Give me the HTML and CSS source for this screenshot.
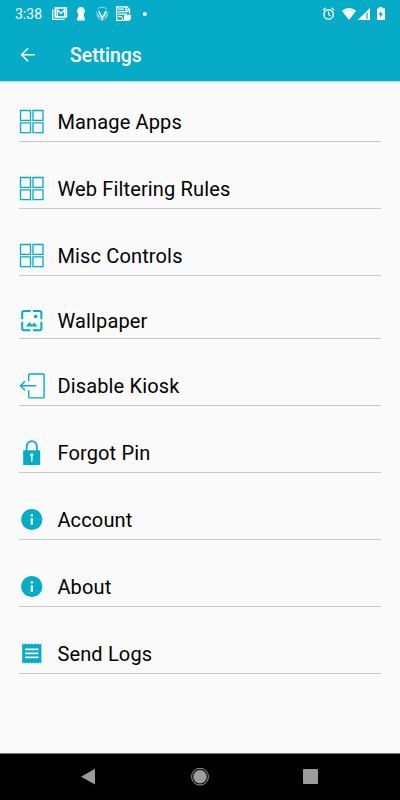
FILE: index.html
```html
<!DOCTYPE html>
<html lang="en">
<head>
    <meta charset="UTF-8">
    <meta name="viewport" content="width=device-width, initial-scale=1.0">
    <link rel="stylesheet" href="styles.css">
    <title>Settings</title>
</head>
<body>
    <!-- shared icons -->
    <svg class="defs" width="0" height="0">
        <symbol id="grid" viewBox="0 0 26 26">
            <path d="M1.5 1.5h10v9.8h-10zM14 1.5h10v9.8H14zM1.5 13.8h10v9.8h-10zM14 13.8h10v9.8H14z" fill="none" stroke="#06abc7" stroke-width="1.3"/>
        </symbol>
        <symbol id="info" viewBox="0 0 26 26">
            <circle cx="12.8" cy="12.5" r="10.6" fill="#06abc7"/>
            <path d="M11.7 7.3h2.2v2.2h-2.2zM11.7 11.2h2.2v6.5h-2.2z" fill="#fff"/>
        </symbol>
    </svg>

    <header class="header">
        <div class="status">
            <span class="time">3:38</span>
            <svg class="left-icons" width="100" height="28" viewBox="50 0 100 28">
                <!-- mail -->
                <path d="M52.7 9.5v9.8h12" fill="none" stroke="#fff" stroke-width="1.3"/>
                <path d="M55.2 8.1h11.2v9H55.2z" fill="none" stroke="#fff" stroke-width="1.5"/>
                <path d="M57.3 17V10l3.7 3.2 3.7-3.2v7" fill="none" stroke="#fff" stroke-width="1.5"/>
                <!-- keyhole -->
                <path d="M81 7a3.9 3.9 0 0 0-2.7 6.7l-.3 3.3-.9 1v2.6h7.8V18l-.9-1-.3-3.3A3.9 3.9 0 0 0 81 7z" fill="#fff"/>
                <!-- v badge -->
                <path d="M97.5 9.5a6 6 0 0 1 9.5 0M96.5 15q1.5 4.3 5.7 5.4M108 15q-1.5 4.3-5.8 5.4" fill="none" stroke="#fff" stroke-opacity=".7" stroke-width=".8"/>
                <path d="M98.8 11l3.4 7.5 4-7.5" fill="none" stroke="#fff" stroke-width="1.6"/>
                <path d="M96.5 12.3l3 5M108 12.3l-3 5" fill="none" stroke="#fff" stroke-width=".8"/>
                <!-- news -->
                <path d="M125 20.3h-8.3V6.8h10.2l2.7 2.8v4" fill="none" stroke="#fff" stroke-width="1.3"/>
                <path d="M126 6.5v3.7h4M118 9.2h6M118 11.7h10.5M118 14.2h9M118 16.7h4M122.5 17v3" fill="none" stroke="#fff" stroke-width="1.2"/>
                <path d="M125 14.8h6V19l-1.7 1.8H124V16z" fill="#fff"/>
                <circle cx="144.8" cy="14" r="2" fill="#fff"/>
            </svg>
            <svg class="right-icons" width="70" height="28" viewBox="320 0 70 28">
                <!-- alarm -->
                <circle cx="328.6" cy="14.4" r="4.7" fill="none" stroke="#fff" stroke-width="1.4"/>
                <path d="M328.6 11.5v3.1l2 1.4M323 10.2l2.8-2.5M334.2 10.2l-2.8-2.5" fill="none" stroke="#fff" stroke-width="1.2"/>
                <!-- wifi -->
                <path d="M341.8 10.8Q349 5.2 356.2 10.8L349 20z" fill="#fff"/>
                <path d="M343.5 12.3Q349 8.2 354.5 12.3" fill="none" stroke="#06abc7" stroke-opacity=".35" stroke-width=".8"/>
                <!-- signal -->
                <path d="M370 8v12h-12.2z" fill="#fff"/>
                <path d="M367 12.5V19" stroke="#06abc7" stroke-width="1.2"/>
                <!-- battery -->
                <path d="M379 7.3h3.8v1.3h2.2V20h-8V8.6h2z" fill="#fff"/>
                <path d="M381.2 10.8l-2.7 4h1.8v3l2.9-4.2h-2z" fill="#06abc7"/>
            </svg>
        </div>
        <div class="toolbar">
            <svg class="back" width="16" height="16" viewBox="0 0 16 16">
                <path d="M14.7 7.7H1.8M8 1.3L1.6 7.7 8 14.1" fill="none" stroke="#fff" stroke-width="1.5"/>
            </svg>
            <h1 class="title">Settings</h1>
        </div>
    </header>

    <main class="list">
        <div class="item">
            <svg class="icon"><use href="#grid"/></svg>
            <span>Manage Apps</span>
        </div>
        <div class="item">
            <svg class="icon"><use href="#grid"/></svg>
            <span>Web Filtering Rules</span>
        </div>
        <div class="item">
            <svg class="icon"><use href="#grid"/></svg>
            <span>Misc Controls</span>
        </div>
        <div class="item short">
            <svg class="icon" viewBox="0 0 26 26">
                <path d="M11.5 3H5A1.8 1.8 0 0 0 3.2 4.8v6.4M14 3h6.6a1.8 1.8 0 0 1 1.8 1.8v6.4M3.2 13.7v6.8A1.8 1.8 0 0 0 5 22.3h6.5M22.4 13.7v6.8a1.8 1.8 0 0 1-1.8 1.8H14" fill="none" stroke="#06abc7" stroke-width="2"/>
                <path d="M7 18.5l3.5-4.5 2.5 3 2-2.5 3.7 4z" fill="#06abc7"/>
                <circle cx="16.6" cy="8.5" r="1.8" fill="#06abc7"/>
            </svg>
            <span>Wallpaper</span>
        </div>
        <div class="item">
            <svg class="icon" viewBox="0 0 26 26">
                <path d="M9.7 8.3V2a1 1 0 0 1 1-1h13.4a1 1 0 0 1 1 1v21.9a1 1 0 0 1-1 1H10.7a1 1 0 0 1-1-1v-6.7" fill="none" stroke="#06abc7" stroke-width="1.4"/>
                <path d="M17 12.7H1.5M6 8.2l-4.5 4.5L6 17.2" fill="none" stroke="#06abc7" stroke-width="1.4"/>
            </svg>
            <span>Disable Kiosk</span>
        </div>
        <div class="item">
            <svg class="icon" viewBox="0 0 26 26">
                <path d="M7.7 11V6.2a5.1 5.1 0 0 1 10.2 0V11" fill="none" stroke="#06abc7" stroke-width="1.7"/>
                <path d="M4.2 10.3h17V25h-17z" fill="#06abc7"/>
                <path d="M12.8 13.2a1.8 1.8 0 0 0-.7 3.4v5h1.4v-5a1.8 1.8 0 0 0-.7-3.4z" fill="#fff"/>
            </svg>
            <span>Forgot Pin</span>
        </div>
        <div class="item">
            <svg class="icon"><use href="#info"/></svg>
            <span>Account</span>
        </div>
        <div class="item">
            <svg class="icon"><use href="#info"/></svg>
            <span>About</span>
        </div>
        <div class="item">
            <svg class="icon" viewBox="0 0 26 26">
                <path d="M3.2 2.6l1.6 1 1.6-1 1.6 1 1.6-1 1.6 1 1.6-1 1.6 1 1.6-1 1.6 1 1.6-1 1.6 1 1.6-1v20l-1.6-1-1.6 1-1.6-1-1.6 1-1.6-1-1.6 1-1.6-1-1.6 1-1.6-1-1.6 1-1.6-1-1.6 1z" fill="#06abc7"/>
                <path d="M6.2 8.4h13.2M6.2 12.4h13.2M6.2 16.4h13.2" stroke="#fff" stroke-width="1.9"/>
            </svg>
            <span>Send Logs</span>
        </div>
    </main>

    <nav class="nav">
        <svg width="20" height="20" viewBox="0 0 20 20"><path d="M3 9.7L17 1.7V17.5z" fill="#9c9c9c"/></svg>
        <svg width="20" height="20" viewBox="0 0 20 20">
            <circle cx="10" cy="9.7" r="8.4" fill="none" stroke="#9c9c9c" stroke-width="1"/>
            <circle cx="10" cy="9.7" r="6.8" fill="#9c9c9c"/>
        </svg>
        <svg width="20" height="20" viewBox="0 0 20 20"><rect x="2" y="2" width="15" height="15" rx="1" fill="#9c9c9c"/></svg>
    </nav>
</body>
</html>
```
FILE: styles.css
```css
* {
    box-sizing: border-box;
}
body {
    margin: 0;
    height: 800px;
    display: flex;
    flex-direction: column;
    background-color: #fafafa;
    font-family: Roboto, sans-serif;
    overflow: hidden;
}
svg {
    display: block;
    flex: none;
}
.defs {
    position: absolute;
}
.header {
    height: 82px;
    background-color: #06abc7;
    border-bottom: 1px solid #b5e0e9;
    color: white;
}
.status {
    display: flex;
    height: 28px;
    align-items: center;
    padding: 0 10px 0 15px;
}
.time {
    width: 35px;
    font-size: 14px;
    line-height: 29px;
}
.right-icons {
    margin-left: auto;
}
.toolbar {
    display: flex;
    align-items: center;
    height: 53px;
    padding-left: 20px;
}
.title {
    margin: 1px 0 0 34px;
    font-size: 19.4px;
    font-weight: 500;
}
.list {
    flex: 1;
    display: flex;
    flex-direction: column;
    gap: 27px;
    padding: 20px 19px 0;
}
.item {
    display: flex;
    align-items: center;
    gap: 12px;
    height: 40px;
    border-bottom: 1px solid #c8c8c8;
    color: #000;
    font-size: 20px;
    letter-spacing: 0.15px;
    line-height: 24px;
}
.item span {
    padding: 1px 0 0 0.4px;
}
.item.short {
    height: 36px;
}
.icon {
    width: 26px;
    height: 26px;
}
.nav {
    height: 47px;
    display: flex;
    justify-content: space-between;
    align-items: center;
    padding: 0 79px 0 78px;
    border-top: 1px solid #777;
    background-color: #000;
}
```
